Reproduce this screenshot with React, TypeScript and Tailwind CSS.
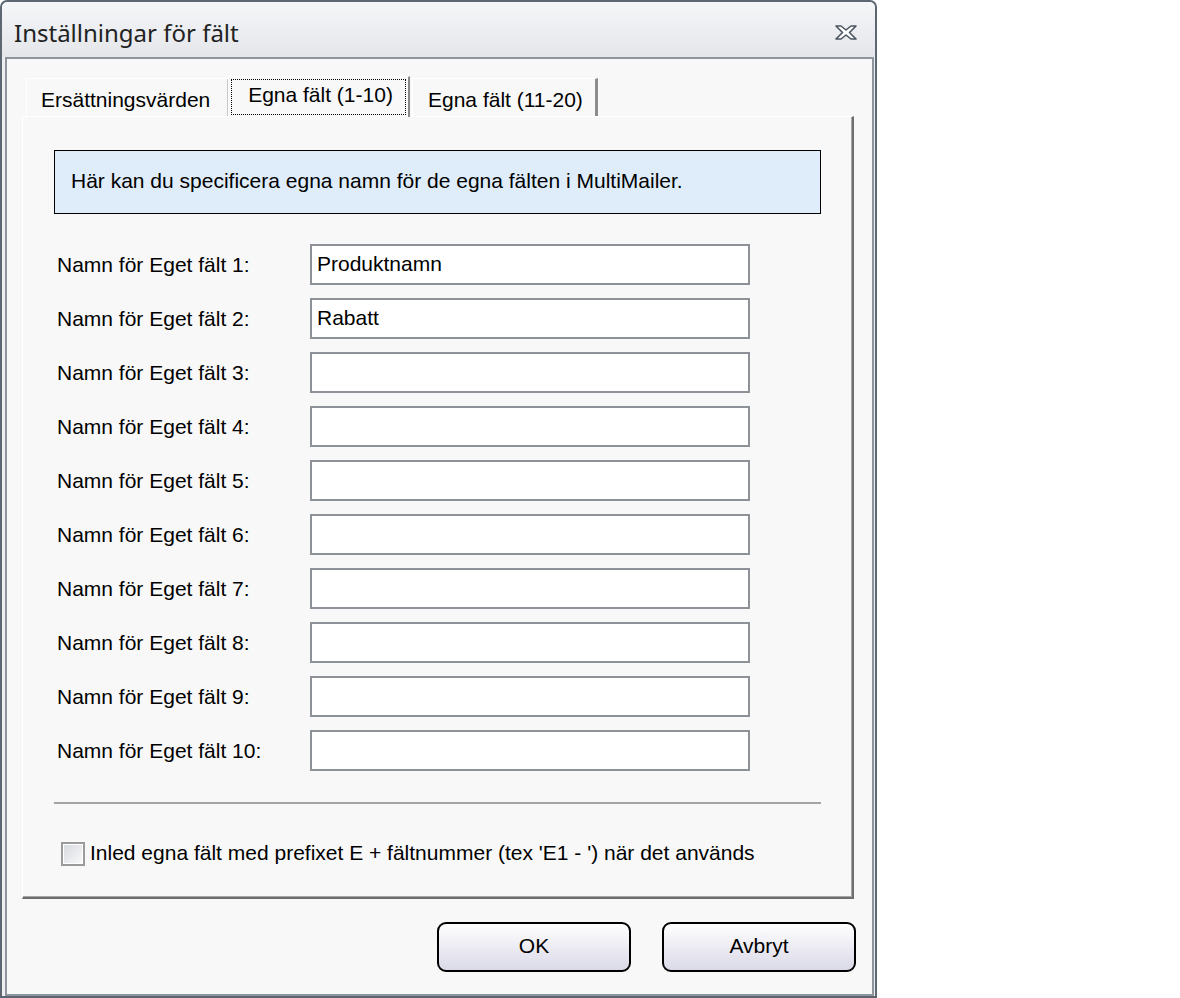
import React from 'react';

const font = { fontFamily: '"Liberation Sans", Arial, sans-serif' };

const fields = ['Produktnamn', 'Rabatt', '', '', '', '', '', '', '', ''];

function CloseIcon() {
  return (
    <svg width="22" height="15" viewBox="0 0 22 15">
      <polygon
        points="1,1 6,1 11,5 16,1 21,1 14.5,7.5 21,14 16,14 11,10 6,14 1,14 7.5,7.5"
        fill="#ffffff"
        stroke="#4b5563"
        strokeWidth="1.6"
        strokeLinejoin="round"
      />
    </svg>
  );
}

function Tabs() {
  return (
    <div className="flex items-end h-[40px] ml-[4px] relative z-10">
      <div className="w-[202px] h-[38px] border-t border-l border-white shadow-[inset_-1px_0_0_#c8c8c8] flex items-center pl-[14px] pt-[4px]">
        Ersättningsvärden
      </div>
      <div className="w-[182px] h-[41px] -mb-[1px] bg-[#f8f8f8] border-t border-l border-white border-r-2 border-r-[#8a8a8a] p-[2px]">
        <div className="h-full border border-dotted border-black flex items-center justify-center pl-[4px] pb-[4px]">
          Egna fält (1-10)
        </div>
      </div>
      <div className="w-[186px] h-[38px] ml-[2px] border-t border-l border-white border-r-[3px] border-r-[#8c8c8c] flex items-center pl-[15px] pt-[4px]">
        Egna fält (11-20)
      </div>
    </div>
  );
}

export default function App() {
  return (
    <div className="w-[1180px] h-[998px] bg-white" style={font}>
      <div className="w-[877px] h-[998px] border-2 border-[#5c6771] rounded-t-[7px] bg-[#eceef1] flex flex-col pl-[3px] pr-[1px]">
        {/* title bar */}
        <div className="h-[55px] -ml-[3px] -mr-[1px] rounded-t-[6px] bg-gradient-to-b from-[#f5f6f8] to-[#e4e6ea] flex items-center justify-between pl-[12px] pr-[18px] pt-[6px]">
          <span className="text-[24px] text-[#222222]" style={{ fontFamily: '"Noto Sans", "Open Sans", sans-serif' }}>
            Inställningar för fält
          </span>
          <CloseIcon />
        </div>

        {/* client */}
        <div className="flex-1 border-2 border-[#8e959c] bg-[#f8f8f8] flex flex-col text-[21px] text-black">
          <div className="pt-[17px] pl-[15px]">
            <Tabs />
            <div className="w-[832px] h-[783px] border-t border-l border-white border-r-2 border-b-2 border-r-[#6e6e6e] border-b-[#6e6e6e] shadow-[inset_-1px_-1px_0_#a6a6a6] flex flex-col pl-[31px] pt-[33px]">
              <div className="w-[767px] h-[64px] bg-[#dfedfb] border border-black flex items-center pl-[16px] pb-[2px]">
                Här kan du specificera egna namn för de egna fälten i MultiMailer.
              </div>

              <div className="flex flex-col gap-[13px] mt-[30px]">
                {fields.map((v, i) => (
                  <div key={i} className="flex items-center h-[41px]">
                    <div className="w-[256px] pl-[3px]">Namn för Eget fält {i + 1}:</div>
                    <div className="w-[440px] h-[41px] border-2 border-[#8d9298] bg-white flex items-center pl-[5px] pb-[2px]">
                      {v}
                    </div>
                  </div>
                ))}
              </div>

              <div className="w-[767px] h-[2px] bg-[#a4a4a4] mt-[31px]" />

              <div className="flex items-center mt-[33px] ml-[7px] gap-[5px]">
                <div className="w-[24px] h-[24px] border-2 border-[#9b9b9b] bg-gradient-to-br from-[#d6d9de] to-[#f9f9fa] shadow-[inset_0_0_0_1px_#ffffff]" />
                <span className="pb-[2px]">Inled egna fält med prefixet E + fältnummer (tex 'E1 - ') när det används</span>
              </div>
            </div>
          </div>

          <div className="flex justify-end gap-[31px] pr-[16px] mt-[23px]">
            <button className="w-[194px] h-[50px] rounded-[9px] border-2 border-black bg-gradient-to-b from-white to-[#dad9e8] pb-[2px]">
              OK
            </button>
            <button className="w-[194px] h-[50px] rounded-[9px] border-2 border-black bg-gradient-to-b from-white to-[#dad9e8] pb-[2px]">
              Avbryt
            </button>
          </div>
        </div>
      </div>
    </div>
  );
}
